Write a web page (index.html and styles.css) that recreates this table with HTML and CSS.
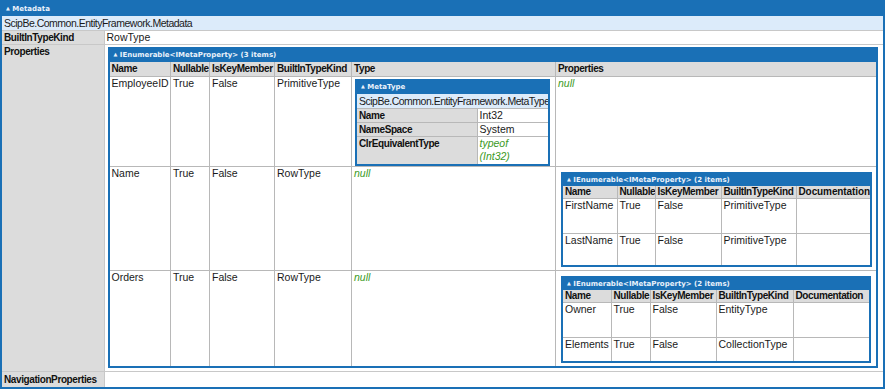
FILE: index.html
```html
<!DOCTYPE html>
<html lang="en">
<head>
    <meta charset="UTF-8">
    <title>Metadata</title>
    <link rel="stylesheet" href="styles.css">
</head>
<body>
    <table class="dump outer">
        <colgroup><col class="c-key"><col></colgroup>
        <tr><td class="title" colspan="2"><span class="arrow">▲</span> Metadata</td></tr>
        <tr class="summary"><td colspan="2">ScipBe.Common.EntityFramework.Metadata</td></tr>
        <tr><th>BuiltInTypeKind</th><td>RowType</td></tr>
        <tr>
            <th>Properties</th>
            <td>
                <!-- IEnumerable<IMetaProperty> (3 items) -->
                <table class="dump props">
                    <colgroup>
                        <col class="p-name"><col class="p-null"><col class="p-key">
                        <col class="p-kind"><col class="p-type"><col>
                    </colgroup>
                    <tr><td class="title" colspan="6"><span class="arrow">▲</span> IEnumerable&lt;IMetaProperty&gt; (3 items)</td></tr>
                    <tr class="head">
                        <th>Name</th><th>Nullable</th><th>IsKeyMember</th>
                        <th>BuiltInTypeKind</th><th>Type</th><th>Properties</th>
                    </tr>
                    <tr class="row-1">
                        <td>EmployeeID</td><td>True</td><td>False</td><td>PrimitiveType</td>
                        <td class="holder">
                            <table class="dump metatype">
                                <colgroup><col class="m-key"><col></colgroup>
                                <tr><td class="title" colspan="2"><span class="arrow">▲</span> MetaType</td></tr>
                                <tr class="summary"><td colspan="2">ScipBe.Common.EntityFramework.MetaType</td></tr>
                                <tr><th>Name</th><td>Int32</td></tr>
                                <tr><th>NameSpace</th><td>System</td></tr>
                                <tr class="tall"><th>ClrEquivalentType</th><td class="null">typeof<br>(Int32)</td></tr>
                            </table>
                        </td>
                        <td class="null">null</td>
                    </tr>
                    <tr class="row-2">
                        <td>Name</td><td>True</td><td>False</td><td>RowType</td>
                        <td class="null">null</td>
                        <td class="holder">
                            <table class="dump sub sub-a">
                                <colgroup>
                                    <col class="a-name"><col class="a-null"><col class="a-key">
                                    <col class="a-kind"><col>
                                </colgroup>
                                <tr><td class="title" colspan="5"><span class="arrow">▲</span> IEnumerable&lt;IMetaProperty&gt; (2 items)</td></tr>
                                <tr>
                                    <th>Name</th><th>Nullable</th><th>IsKeyMember</th>
                                    <th>BuiltInTypeKind</th><th class="clip">Documentation</th>
                                </tr>
                                <tr class="r35"><td>FirstName</td><td>True</td><td>False</td><td>PrimitiveType</td><td></td></tr>
                                <tr class="r33"><td>LastName</td><td>True</td><td>False</td><td>PrimitiveType</td><td></td></tr>
                            </table>
                        </td>
                    </tr>
                    <tr class="row-3">
                        <td>Orders</td><td>True</td><td>False</td><td>RowType</td>
                        <td class="null">null</td>
                        <td class="holder">
                            <table class="dump sub sub-b">
                                <colgroup>
                                    <col class="b-name"><col class="b-null"><col class="b-key">
                                    <col class="b-kind"><col>
                                </colgroup>
                                <tr><td class="title" colspan="5"><span class="arrow">▲</span> IEnumerable&lt;IMetaProperty&gt; (2 items)</td></tr>
                                <tr>
                                    <th>Name</th><th>Nullable</th><th>IsKeyMember</th>
                                    <th>BuiltInTypeKind</th><th>Documentation</th>
                                </tr>
                                <tr class="r36"><td>Owner</td><td>True</td><td>False</td><td>EntityType</td><td></td></tr>
                                <tr class="r23"><td>Elements</td><td>True</td><td>False</td><td>CollectionType</td><td></td></tr>
                            </table>
                        </td>
                    </tr>
                </table>
            </td>
        </tr>
        <tr class="nav"><th>NavigationProperties</th><td></td></tr>
    </table>
</body>
</html>
```

FILE: styles.css
```css
* {
    box-sizing: border-box;
}

body {
    margin: 0;
    background: #fff;
    color: #1a1a1a;
    font-family: "Liberation Sans", Arial, sans-serif;
    font-size: 10.5px;
    line-height: 13px;
}

/* dump tables */
.dump {
    border-collapse: collapse;
    border: 2px solid #1a70b6;
    table-layout: fixed;
}

.dump th,
.dump td {
    border: 1px solid #b8b8b8;
    padding: 0 2px;
    vertical-align: top;
    text-align: left;
    overflow: hidden;
}

.dump th {
    background: #dcdcdc;
    color: #111;
    font-size: 10px;
    font-weight: bold;
    letter-spacing: -0.4px;
    padding: 0 1px 0 2px;
    white-space: nowrap;
}

.dump th.clip {
    letter-spacing: -0.1px;
}

.dump td.title {
    background: #1a70b6;
    color: #eaf2fb;
    font-family: "DejaVu Sans", sans-serif;
    font-size: 7px;
    font-weight: bold;
    line-height: 11px;
    letter-spacing: 0;
    padding: 0 4px;
    border-color: #1a70b6;
    white-space: nowrap;
}

.arrow {
    font-size: 5px;
    vertical-align: 1px;
}

.dump .summary td {
    background: #dcebfa;
    line-height: 14px;
    letter-spacing: -0.5px;
    white-space: nowrap;
}

.null {
    color: #3c9a25;
    font-style: italic;
}

/* outer table */
.outer {
    width: 885px;
}

.outer > tbody > tr > td.title {
    line-height: 12px;
}

.c-key {
    width: 103px;
}

.outer > tbody > tr > td,
.outer > tbody > tr > th {
    border-color: #c8c8c8;
}

.outer .nav th,
.outer .nav td {
    line-height: 15px;
}

.props {
    width: 770px;
    margin: 2px 0 3px 1px;
}

.props .head th {
    line-height: 14px;
}

.p-name { width: 62px; }
.p-null { width: 39px; }
.p-key { width: 65px; }
.p-kind { width: 77px; }
.p-type { width: 204px; }

/* nested tables */
.metatype {
    width: 195px;
    margin: 2px 0 0 1px;
}

.m-key {
    width: 121px;
}

.metatype th,
.metatype td {
    line-height: 13px;
}

.metatype .tall td,
.metatype .tall th {
    height: 28px;
}

.sub {
    margin: 5px 0 3px 3px;
}

.sub td.title {
    line-height: 10px;
}

.sub th {
    line-height: 12px;
}

.sub-a {
    width: 311px;
}

.a-name { width: 55px; }
.a-null { width: 38px; }
.a-key { width: 66px; }
.a-kind { width: 75px; }

.sub-b {
    width: 310px;
}

.b-name { width: 49px; }
.b-null { width: 39px; }
.b-key { width: 66px; }
.b-kind { width: 77px; }

.r35 td { height: 35px; }
.r33 td { height: 33px; }
.r36 td { height: 35px; }
.r23 td { height: 24px; }
```
